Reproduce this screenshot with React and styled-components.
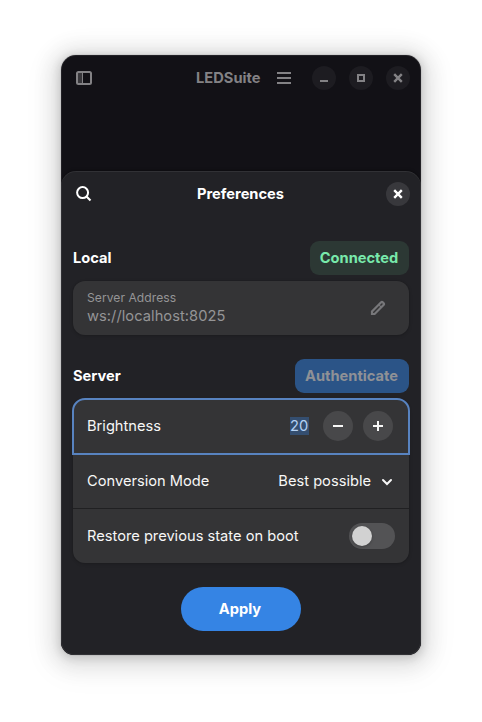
import React from "react";
import styled, { createGlobalStyle } from "styled-components";

const GlobalStyle = createGlobalStyle`
  * { box-sizing: border-box; }
  body {
    margin: 0;
    background: #fff;
    font-family: Inter, sans-serif;
    font-size: 14.67px;
    line-height: 18px;
    color: #fff;
  }
  button { font: inherit; border: 0; padding: 0; }
`;

const Desktop = styled.main`
  width: 482px;
  height: 722px;
  padding: 55px 61px 67px;
  overflow: hidden;
`;

const Window = styled.div`
  width: 360px;
  height: 600px;
  display: flex;
  flex-direction: column;
  background: #121116;
  border-radius: 15px 15px 13px 13px;
  overflow: hidden;
  position: relative;
  box-shadow: 0 3px 20px 10px rgba(0, 0, 0, 0.09), 0 6px 30px 14px rgba(0, 0, 0, 0.04),
    0 2px 8px 2px rgba(0, 0, 0, 0.13), 0 0 0 1px rgba(0, 0, 0, 0.05);
  &::after {
    content: "";
    position: absolute;
    inset: 0;
    border-radius: inherit;
    box-shadow: inset 0 0 0 1px rgba(255, 255, 255, 0.07);
    pointer-events: none;
  }
`;

const TitleBar = styled.header`
  height: 46px;
  flex: none;
  margin-bottom: 70px;
  padding: 0 11px 0 15px;
  display: flex;
  align-items: center;
  color: #838285;
`;

const WindowTitle = styled.h1`
  margin: 0 15.5px 0 auto;
  font-size: inherit;
  font-weight: 700;
`;

const WindowControls = styled.div`
  display: flex;
  gap: 13px;
  margin-left: 20px;
`;

const RoundButton = styled.button`
  width: ${(p) => p.$size}px;
  height: ${(p) => p.$size}px;
  border-radius: 50%;
  display: grid;
  place-items: center;
  color: inherit;
  background: ${(p) => p.$fill};
`;

const Icon = styled.svg`
  display: block;
  flex: none;
  width: 16px;
  height: 16px;
  fill: none;
  stroke: currentColor;
  stroke-width: 2;
`;

const MenuIcon = styled(Icon)`
  margin-left: auto;
`;

const ChevronIcon = styled(Icon)`
  margin-left: 8px;
`;

const Sheet = styled.section`
  flex: 1;
  background: #222226;
  border-radius: 15px 15px 0 0;
  box-shadow: inset 0 1px 0 rgba(255, 255, 255, 0.07), 0 -1px 3px rgba(0, 0, 0, 0.3);
  display: flex;
  flex-direction: column;
`;

const SheetHeader = styled.header`
  height: 46px;
  padding: 0 11px 0 15px;
  display: grid;
  grid-template-columns: 24px 1fr 24px;
  align-items: center;
`;

const SheetTitle = styled.h2`
  margin: 0;
  padding-right: 5px;
  text-align: center;
  font-size: inherit;
  font-weight: 700;
`;

const Group = styled.section`
  margin: ${(p) => p.$top}px 12px 0;
`;

const GroupHeader = styled.div`
  height: 34px;
  margin-bottom: 6px;
  display: flex;
  align-items: center;
  justify-content: space-between;
  font-weight: 700;
`;

const tones = {
  success: { bg: "#2c3834", fg: "#78e9ab" },
  accent: { bg: "#2b5487", fg: "#8f9196" },
};

const Tag = styled.button`
  height: 34px;
  width: ${(p) => p.$width}px;
  padding-right: 1px;
  border-radius: 9px;
  font-weight: 700;
  background: ${(p) => tones[p.$tone].bg};
  color: ${(p) => tones[p.$tone].fg};
`;

const Card = styled.div`
  border-radius: 12px;
  background: #343436;
  box-shadow: 0 1px 3px 1px rgba(0, 0, 0, 0.1), 0 0 0 1px rgba(0, 0, 0, 0.04);
`;

const Row = styled.div`
  height: ${(p) => (p.$focused || p.$divided ? 55 : 54)}px;
  padding: 0 14px ${(p) => (p.$focused ? 1 : 0)}px;
  display: flex;
  align-items: center;
  color: #f7f7f7;
  border-top: ${(p) => (p.$divided ? "1px solid #202022" : "0")};
  border-radius: ${(p) => (p.$focused ? "12px 12px 0 0" : "0")};
  outline: ${(p) => (p.$focused ? "2px solid #5883c0" : "none")};
  outline-offset: -1px;
  position: ${(p) => (p.$focused ? "relative" : "static")};
`;

const RowLabel = styled.span`
  margin-right: auto;
`;

const Address = styled.div`
  flex: 1;
  color: #959596;
  letter-spacing: 0.05px;
`;

const Caption = styled.div`
  font-size: 12.1px;
  line-height: 16px;
  margin-top: -2px;
  padding-bottom: 1px;
`;

const EditIcon = styled(Icon)`
  color: #77777a;
  margin-right: 9px;
`;

const SelectedValue = styled.span`
  width: 19px;
  margin-right: 14px;
  line-height: 18px;
  color: #b4d1f4;
  background: #344e70;
`;

const StepButtons = styled.div`
  display: flex;
  gap: 10px;
  margin-right: 2px;
`;

const Toggle = styled.div`
  width: 46px;
  height: 26px;
  padding: 3px;
  border-radius: 13px;
  background: #535355;
  &::before {
    content: "";
    display: block;
    width: 20px;
    height: 20px;
    border-radius: 50%;
    background: #d2d2d2;
    box-shadow: 0 1px 3px rgba(0, 0, 0, 0.25);
  }
`;

const ApplyButton = styled.button`
  width: 120px;
  height: 44px;
  margin: 24px auto 0;
  padding-right: 2px;
  border-radius: 22px;
  background: #3584e4;
  color: #fff;
  font-weight: 700;
`;

const CloseIcon = () => (
  <Icon viewBox="0 0 16 16"><path d="M4.2 4.2 11.8 11.8M11.8 4.2 4.2 11.8" strokeWidth="2.4" /></Icon>
);

export default function App() {
  return (
    <>
      <GlobalStyle />
      <Desktop>
        <Window>
          <TitleBar>
            <Icon viewBox="0 0 16 16">
              <path d="M2 3h4v10H2z" fill="#38373b" stroke="none" />
              <path d="M6.5 2v12" strokeWidth="1" />
              <rect x="1" y="2" width="14" height="12" rx="1.5" />
            </Icon>
            <WindowTitle>LEDSuite</WindowTitle>
            <Icon viewBox="0 0 16 16"><path d="M1 3h14M1 8h14M1 13h14" /></Icon>
            <WindowControls>
              <RoundButton $size={24} $fill="#1d1c21" aria-label="Minimize">
                <Icon viewBox="0 0 16 16"><path d="M4 11h8" /></Icon>
              </RoundButton>
              <RoundButton $size={24} $fill="#1d1c21" aria-label="Maximize">
                <Icon viewBox="0 0 16 16"><path d="M5 5h6v6H5z" /></Icon>
              </RoundButton>
              <RoundButton $size={24} $fill="#1d1c21" aria-label="Close window"><CloseIcon /></RoundButton>
            </WindowControls>
          </TitleBar>
          <Sheet>
            <SheetHeader>
              <Icon viewBox="0 0 16 16"><circle cx="6.6" cy="6.6" r="5.5" /><path d="m10.5 10.5 4 4" strokeWidth="2.2" /></Icon>
              <SheetTitle>Preferences</SheetTitle>
              <RoundButton $size={24} $fill="#38383c" aria-label="Close preferences"><CloseIcon /></RoundButton>
            </SheetHeader>
            <Group $top={24}>
              <GroupHeader>Local<Tag $tone="success" $width={99}>Connected</Tag></GroupHeader>
              <Card>
                <Row>
                  <Address><Caption>Server Address</Caption>ws://localhost:8025</Address>
                  <EditIcon viewBox="0 0 16 16">
                    <path d="M2 14v-2.6l8.9-8.9a1.5 1.5 0 0 1 2.1 0l.5.5a1.5 1.5 0 0 1 0 2.1L4.6 14z" strokeWidth="2.2" />
                    <path d="m9.2 5.1 1.7 1.7" strokeWidth="1.2" />
                  </EditIcon>
                </Row>
              </Card>
            </Group>
            <Group $top={24}>
              <GroupHeader>Server<Tag $tone="accent" $width={114}>Authenticate</Tag></GroupHeader>
              <Card>
                <Row $focused>
                  <RowLabel>Brightness</RowLabel>
                  <SelectedValue>20</SelectedValue>
                  <StepButtons>
                    <RoundButton $size={30} $fill="#48484a" aria-label="Decrease">
                      <Icon viewBox="0 0 16 16"><path d="M3 8h10" /></Icon>
                    </RoundButton>
                    <RoundButton $size={30} $fill="#48484a" aria-label="Increase">
                      <Icon viewBox="0 0 16 16"><path d="M3 8h10M8 3v10" /></Icon>
                    </RoundButton>
                  </StepButtons>
                </Row>
                <Row>
                  <RowLabel>Conversion Mode</RowLabel>
                  <span>Best possible</span>
                  <ChevronIcon viewBox="0 0 16 16"><path d="m4 7 4 4 4-4" strokeLinecap="round" /></ChevronIcon>
                </Row>
                <Row $divided>
                  <RowLabel>Restore previous state on boot</RowLabel>
                  <Toggle role="switch" aria-checked="false" />
                </Row>
              </Card>
            </Group>
            <ApplyButton>Apply</ApplyButton>
          </Sheet>
        </Window>
      </Desktop>
    </>
  );
}
